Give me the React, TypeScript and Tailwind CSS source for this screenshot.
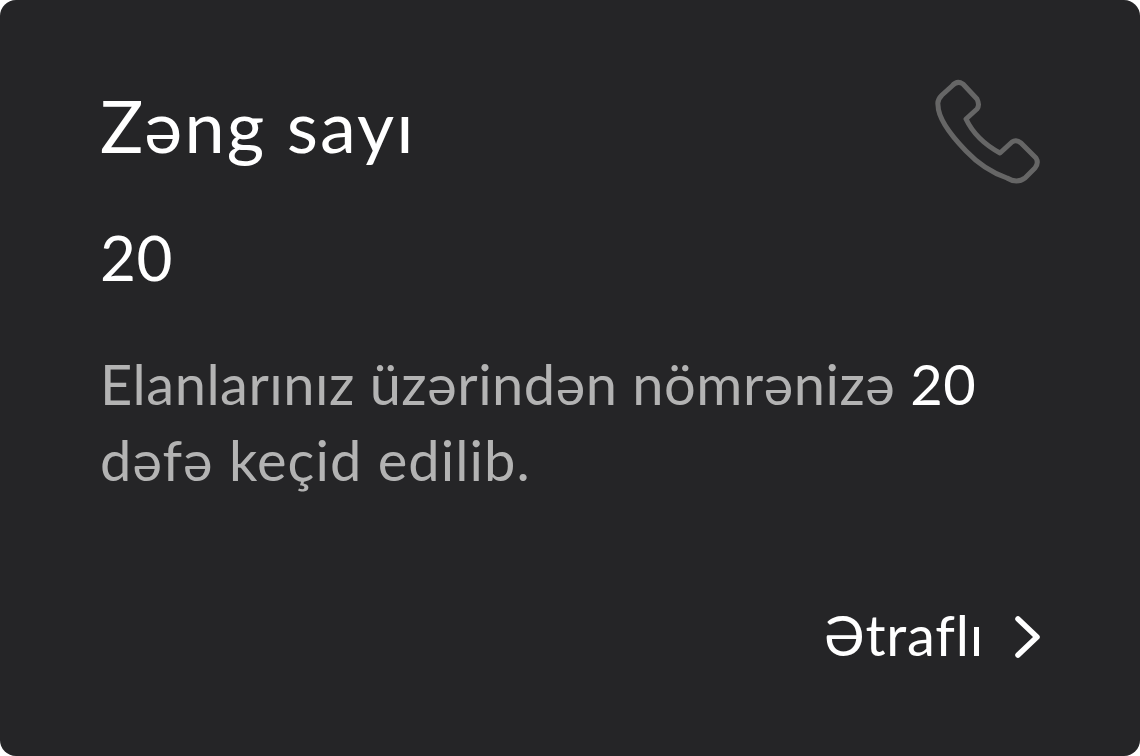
export default function App() {
  return (
    <div className="w-[1140px] h-[756px] bg-white">
      <div
        className="flex h-full w-full flex-col rounded-2xl bg-[#252527] pl-[100px] pr-[98px] pt-[80px] font-['Lato','Noto_Sans',sans-serif]"
      >
        <div className="flex items-start justify-between">
          <h1 className="text-[72px] leading-[90px] font-normal tracking-[2.1px] text-white">Zəng sayı</h1>
          <svg width="104" height="104" viewBox="36 20 104 104" fill="none" overflow="visible" className="mr-[2px]">
            <path
              d="M52 26 Q57 20 63 24 L77 39 Q80 45 77 49 L66 59 Q76 80 100 93 L112 82 Q116 79 121 83 L136 98 Q139 103 135 108 L125 118 Q117 124 107 118 Q84 110 66 91 Q38 62 38 45 Q37 40 42 35 Z"
              stroke="#666666"
              strokeWidth="5"
              strokeLinejoin="round"
            />
          </svg>
        </div>
        <div className="mt-[33px] text-[62px] leading-[80px] tracking-[0.5px] text-white">20</div>
        <p className="mt-[49px] text-[56px] leading-[76px] tracking-[0.5px] text-[#b3b3b3]">
          Elanlarınız üzərindən nömrənizə <span className="text-white">20</span>{" "}
          <span className="tracking-[1.05px]">dəfə keçid edilib.</span>
        </p>
        <div className="mt-[99px] flex items-center justify-end gap-[30px]">
          <span className="text-[56px] leading-[76px] tracking-[0.8px] text-white">Ətraflı</span>
          <svg width="28" height="44" viewBox="0 0 28 44" fill="none" className="mt-[4px]">
            <path d="M4 4 L23 22 L4 40" stroke="#ffffff" strokeWidth="5.5" strokeLinecap="round" strokeLinejoin="round" />
          </svg>
        </div>
      </div>
    </div>
  );
}
